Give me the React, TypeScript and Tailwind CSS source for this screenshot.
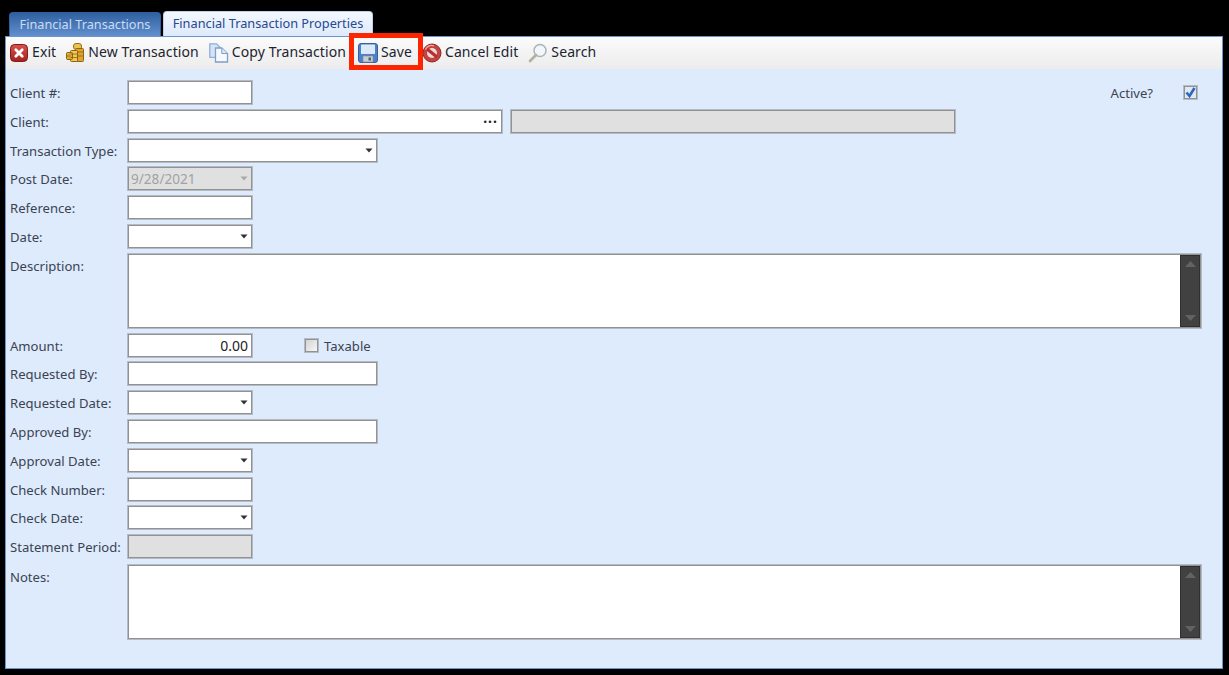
import type { ReactNode } from "react";

const edgeClass = "border border-[#b4bbc4] shadow-[inset_0_0_0_1px_#929292]";
const boxClass = `h-[25px] shrink-0 ${edgeClass} bg-white`;

function Arrow({ muted }: { muted?: boolean }) {
  return (
    <svg width="8" height="5" viewBox="0 0 8 5" className="shrink-0">
      <path d="M0.5 0.5h7L4 4.5z" fill={muted ? "#a8a8a8" : "#333"} />
    </svg>
  );
}

function Row({ label, children, className = "h-[25px]" }: { label: string; children?: ReactNode; className?: string }) {
  return (
    <div className={`flex items-start ${className}`}>
      <span className="w-[117px] shrink-0 pt-[3px] text-[13.1px] text-[#3b4351] leading-[20px]">{label}</span>
      {children}
    </div>
  );
}

function Field({ wide, disabled }: { wide?: boolean; disabled?: boolean }) {
  return <div className={`${boxClass} ${wide ? "w-[251px]" : "w-[126px]"} ${disabled ? "!bg-[#e0e0e0]" : ""}`} />;
}

function Drop({ wide, value, disabled }: { wide?: boolean; value?: string; disabled?: boolean }) {
  return (
    <div className={`${boxClass} ${wide ? "w-[251px]" : "w-[126px]"} flex items-center justify-between pl-[3px] pr-[4px] ${disabled ? "!bg-[#e0e0e0] text-[#a2a2a2]" : ""}`}>
      <span className="text-[13.6px] leading-none">{value}</span>
      <Arrow muted={disabled} />
    </div>
  );
}

function MemoBox({ h }: { h: string }) {
  return (
    <div className={`flex w-[1075px] shrink-0 ${edgeClass} bg-white p-px ${h}`}>
      <div className="flex-1" />
      <div className="flex w-[20px] flex-col items-center justify-between border border-[#2f2f2f] bg-[#414141] py-[5px]">
        <svg width="11" height="6" viewBox="0 0 11 6"><path d="M5.5 0L11 6H0z" fill="#626262" /></svg>
        <svg width="11" height="6" viewBox="0 0 11 6"><path d="M0 0h11L5.5 6z" fill="#626262" /></svg>
      </div>
    </div>
  );
}

function ExitIcon() {
  return (
    <svg width="18" height="18" viewBox="0 0 18 18">
      <defs>
        <linearGradient id="exitFill" x1="0" y1="0" x2="0" y2="1">
          <stop offset="0" stopColor="#d9534c" />
          <stop offset="1" stopColor="#a5201f" />
        </linearGradient>
      </defs>
      <rect x="0.5" y="0.5" width="17" height="17" rx="4" fill="url(#exitFill)" stroke="#7d1c1c" />
      <path d="M5.8 5.8l6.4 6.4M12.2 5.8l-6.4 6.4" stroke="#fff" strokeWidth="2.8" strokeLinecap="round" />
    </svg>
  );
}

function CoinsIcon() {
  return (
    <svg width="18" height="20" viewBox="0 0 18 20">
      <rect x="7.5" y="0.5" width="8" height="6" rx="2.5" fill="#edc24f" stroke="#9a7118" />
      <rect x="9.5" y="5.5" width="8" height="13" rx="1" fill="#e0a52c" stroke="#8a6414" />
      <rect x="4.5" y="7.5" width="7" height="11" rx="1" fill="#f2c752" stroke="#8a6414" />
      <rect x="0.5" y="9.5" width="6" height="7" rx="1" fill="#e3a92e" stroke="#8a6414" />
      <path d="M4.5 11h7M4.5 14.5h7M11.5 9h6M11.5 13h6M0.5 13h4" stroke="#8a6414" strokeWidth="0.8" />
    </svg>
  );
}

function CopyIcon() {
  return (
    <svg width="20" height="20" viewBox="0 0 20 20">
      <path d="M0.8 0.8h6.7l3.5 3.5v10H0.8z" fill="#d5e4f6" stroke="#8eafd8" strokeWidth="1.3" />
      <path d="M6.5 5h6.3l5.7 5.5V19H6.5z" fill="#f6faff" stroke="#7f9fc9" strokeWidth="1.3" />
      <path d="M12.8 5v5.5h5.7" fill="#d9e7f6" stroke="#7f9fc9" />
    </svg>
  );
}

function SaveIcon() {
  return (
    <svg width="20" height="20" viewBox="0 0 20 20">
      <rect x="0.5" y="0.5" width="19" height="19" rx="2.5" fill="#4d82c9" stroke="#38609b" />
      <rect x="3" y="1.5" width="14" height="9.5" rx="0.5" fill="#dce9f8" />
      <rect x="5" y="13" width="10" height="6" fill="#c9ced6" stroke="#7f8b9b" strokeWidth="0.6" />
      <rect x="10.5" y="14.5" width="2.5" height="3" fill="#555e6d" />
    </svg>
  );
}

function CancelIcon() {
  return (
    <svg width="20" height="20" viewBox="0 0 20 20">
      <circle cx="10" cy="10" r="9" fill="#c4423f" stroke="#8f2626" />
      <circle cx="10" cy="10" r="5" fill="#eadcd8" />
      <path d="M5 6l10 8" stroke="#b72f2f" strokeWidth="3.2" />
      <path d="M3.5 6.5A7.5 7.5 0 0 1 12 2.8" stroke="#f0aaa4" strokeWidth="1.3" fill="none" />
    </svg>
  );
}

function SearchIcon() {
  return (
    <svg width="20" height="20" viewBox="0 0 20 20">
      <circle cx="12" cy="7.5" r="6" fill="#f3f7fb" stroke="#a9b3ba" strokeWidth="1.5" />
      <path d="M8 12l-6 6" stroke="#b3b09c" strokeWidth="2.6" strokeLinecap="round" />
    </svg>
  );
}

function ToolBtn({ icon, label, className = "gap-[3px]" }: { icon: ReactNode; label: string; className?: string }) {
  return (
    <div className={`flex h-full items-center text-[#1c2430] ${className}`}>
      {icon}
      <span className="mb-[2px] text-[14px] leading-none tracking-[0.1px]">{label}</span>
    </div>
  );
}

export default function App() {
  return (
    <div className="relative flex h-[675px] w-[1229px] flex-col overflow-hidden bg-black pl-[5px] pr-[6px] pb-[6px] pt-[11px] font-['Noto_Sans',sans-serif] text-[14px]">
      <div className="flex h-[25px] shrink-0 items-end gap-[2px] pl-[4px]">
        <div className="flex h-[24px] w-[152px] items-center justify-center rounded-t-[4px] border border-b-0 border-[#345f9e] bg-gradient-to-b from-[#2f609f] to-[#6390cf] text-[12.7px] text-[#c9dcf3]">Financial Transactions</div>
        <div className="flex h-[25px] w-[210px] items-center justify-center rounded-t-[4px] border border-b-0 border-[#bcd0ea] bg-gradient-to-b from-[#f4f8fe] to-[#dde9fb] text-[12.75px] text-[#27488f]">Financial Transaction Properties</div>
      </div>
      <div className="flex flex-1 flex-col border border-[#6e95c9] bg-[#deebfd]">
        <div className="flex h-[32px] shrink-0 items-center gap-[10px] bg-gradient-to-b from-[#fbfbfb] to-[#ececec] pl-[4px]">
          <ToolBtn icon={<ExitIcon />} label="Exit" className="gap-[4px]" />
          <ToolBtn icon={<CoinsIcon />} label="New Transaction" className="gap-[4px]" />
          <ToolBtn icon={<CopyIcon />} label="Copy Transaction" />
          <ToolBtn icon={<SaveIcon />} label="Save" className="ml-[2px] gap-[3px]" />
          <ToolBtn icon={<CancelIcon />} label="Cancel Edit" />
          <ToolBtn icon={<SearchIcon />} label="Search" />
        </div>
        <div className="flex flex-col gap-[3.8px] pl-[4px] pt-[11px]">
          <Row label="Client #:">
            <Field />
            <span className="ml-auto pt-[3px] text-[13.1px] leading-[20px] text-[#3b4351]">Active?</span>
            <div className={`ml-[30px] mr-[24px] mt-[5px] flex h-[15px] w-[15px] items-center justify-center ${edgeClass} bg-[#dfe8f5]`}>
              <svg width="11" height="11" viewBox="0 0 11 11"><path d="M1.5 5.5l3 3.5L9.5 1" stroke="#2f66bb" strokeWidth="2.6" fill="none" /></svg>
            </div>
          </Row>
          <Row label="Client:">
            <div className={`${boxClass} flex w-[376px] items-center justify-end pr-[4px]`}>
              <span className="mb-[6px] font-bold leading-none tracking-[1px] text-[#222]">...</span>
            </div>
            <div className={`${boxClass} ml-[7px] w-[446px] !bg-[#e0e0e0]`} />
          </Row>
          <Row label="Transaction Type:"><Drop wide /></Row>
          <Row label="Post Date:"><Drop value="9/28/2021" disabled /></Row>
          <Row label="Reference:"><Field /></Row>
          <Row label="Date:"><Drop /></Row>
          <Row label="Description:" className="h-[76px]"><MemoBox h="h-[76px]" /></Row>
          <Row label="Amount:">
            <div className={`${boxClass} flex w-[126px] items-center justify-end pr-[4px] text-[#222]`}>0.00</div>
            <div className={`ml-[51px] mt-[5px] h-[15px] w-[15px] ${edgeClass} bg-gradient-to-br from-[#d0d0d0] to-[#fafafa]`} />
            <span className="ml-[5px] pt-[3px] text-[13.1px] leading-[20px] text-[#3b4351]">Taxable</span>
          </Row>
          <Row label="Requested By:"><Field wide /></Row>
          <Row label="Requested Date:"><Drop /></Row>
          <Row label="Approved By:"><Field wide /></Row>
          <Row label="Approval Date:"><Drop /></Row>
          <Row label="Check Number:"><Field /></Row>
          <Row label="Check Date:"><Drop /></Row>
          <Row label="Statement Period:"><Field disabled /></Row>
          <Row label="Notes:" className="mt-[1px] h-[76px]"><MemoBox h="h-[76px]" /></Row>
        </div>
      </div>
      <div className="absolute left-[349px] top-[33px] h-[37px] w-[74px] border-[5px] border-[#fd2600]" />
    </div>
  );
}
